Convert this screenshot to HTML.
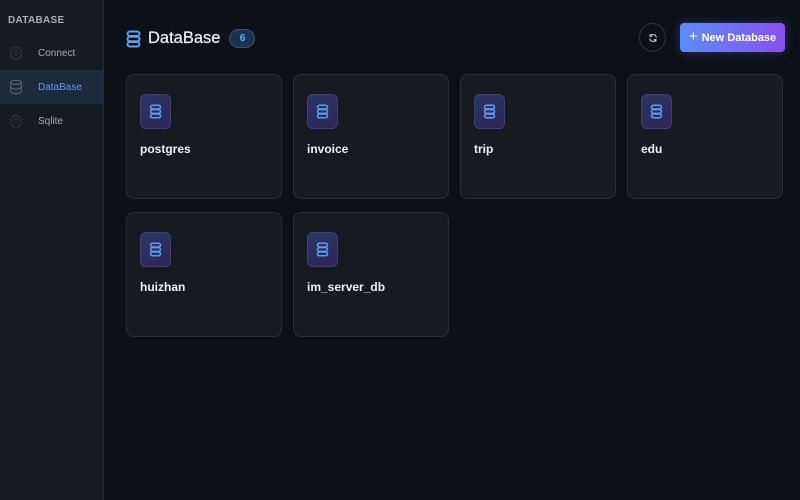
<!DOCTYPE html>
<html><head><meta charset="utf-8"><style>
*{margin:0;padding:0;box-sizing:border-box}
body{width:800px;height:500px;overflow:hidden;background:#0d1017;font-family:"Liberation Sans",sans-serif;position:relative}
.side{position:absolute;left:0;top:0;width:104px;height:500px;background:#161a22;border-right:1px solid #262b35}
.side h6{position:absolute;left:8px;top:15px;font-size:10px;font-weight:bold;color:#a8adb6;letter-spacing:.3px}
.item{position:absolute;left:0;width:103px;height:34px;display:flex;align-items:center;font-size:10px;color:#a7acb5}
.item svg{position:absolute;left:8px;top:9px}
.item span{position:absolute;left:38px}
.item.act{background:#1b2a3d}
.item.act span{color:#5ea0ec}
.title{position:absolute;left:126px;top:29px;display:flex;align-items:center}
.title span{font-size:16.5px;color:#f0f2f5;margin-left:7px;-webkit-text-stroke:.2px #f0f2f5}
.badge{margin-left:9px;width:26px;height:19px;border-radius:10px;background:#1b3353;border:1px solid #335479;color:#6aaaf3;font-size:10px;font-weight:bold;display:flex;align-items:center;justify-content:center}
.ref{position:absolute;left:639px;top:23px;width:27px;height:29px;border-radius:50%;border:1px solid #2f3440;display:flex;align-items:center;justify-content:center}
.btn{position:absolute;left:680px;top:23px;width:105px;height:29px;border-radius:4px;background:linear-gradient(90deg,#5b8ef8,#8a4ff0);color:#fff;font-size:11px;font-weight:bold;display:flex;align-items:center;justify-content:center;box-shadow:0 0 10px rgba(100,110,250,.35)}
.btn i{font-style:normal;font-weight:normal;font-size:15px;margin-right:4px;margin-top:-2px}
.card{position:absolute;width:156px;height:125px;border:1px solid #2a2e37;border-radius:8px;background:#171a21}
.ic{position:absolute;left:13px;top:19px;width:31px;height:35px;border-radius:6px;background:linear-gradient(160deg,#2a3566,#2e2656);border:1px solid #3a4275;display:flex;align-items:center;justify-content:center}
.card b{position:absolute;left:13px;top:67px;font-size:12px;color:#eef0f3}
</style></head><body>
<div class="side">
<h6>DATABASE</h6>
<div class="item" style="top:36px"><svg width="16" height="16" viewBox="0 0 24 24" fill="none" stroke="#30343d" stroke-width="1.5"><circle cx="12" cy="12" r="3"/><path d="M12 2l2 3 3.5-1 .5 3.5 3 2-2 3 2 3-3 2-.5 3.5-3.5-1-2 3-2-3-3.5 1L6 17.5l-3-2 2-3-2-3 3-2L6.5 4l3.5 1z"/></svg><span>Connect</span></div>
<div class="item act" style="top:70px"><svg width="16" height="16" viewBox="0 0 24 24" fill="none" stroke="#5d636e" stroke-width="1.6"><ellipse cx="12" cy="5" rx="8" ry="3"/><path d="M4 5v14c0 1.7 3.6 3 8 3s8-1.3 8-3V5M4 12c0 1.7 3.6 3 8 3s8-1.3 8-3"/></svg><span>DataBase</span></div>
<div class="item" style="top:104px"><svg width="16" height="16" viewBox="0 0 24 24" fill="none" stroke="#30343d" stroke-width="1.5"><circle cx="12" cy="12" r="3"/><path d="M12 2l2 3 3.5-1 .5 3.5 3 2-2 3 2 3-3 2-.5 3.5-3.5-1-2 3-2-3-3.5 1L6 17.5l-3-2 2-3-2-3 3-2L6.5 4l3.5 1z"/></svg><span>Sqlite</span></div>
</div>
<div class="title"><svg width="15" height="18" viewBox="0 0 20 24" fill="none" stroke="#5ea0ec" stroke-width="2.6"><rect x="2" y="2" width="16" height="6" rx="3"/><rect x="2" y="9" width="16" height="6" rx="3"/><rect x="2" y="16" width="16" height="6" rx="3"/></svg><span>DataBase</span><div class="badge">6</div></div>
<div class="ref"><svg width="10" height="10" viewBox="0 0 24 24" fill="none" stroke="#c8ccd3" stroke-width="2.5"><path d="M20 11A8 8 0 0 0 5 8M4 13a8 8 0 0 0 15 3"/><path d="M5 3v5h5M19 21v-5h-5"/></svg></div>
<div class="btn"><i>+</i>New Database</div>
<div class="card" style="left:126px;top:74px"><div class="ic"><svg width="13" height="15" viewBox="0 0 20 24" fill="none" stroke="#5e9ef0" stroke-width="2.4"><rect x="2" y="2" width="16" height="6" rx="3"/><rect x="2" y="9" width="16" height="6" rx="3"/><rect x="2" y="16" width="16" height="6" rx="3"/></svg></div><b>postgres</b></div>
<div class="card" style="left:293px;top:74px"><div class="ic"><svg width="13" height="15" viewBox="0 0 20 24" fill="none" stroke="#5e9ef0" stroke-width="2.4"><rect x="2" y="2" width="16" height="6" rx="3"/><rect x="2" y="9" width="16" height="6" rx="3"/><rect x="2" y="16" width="16" height="6" rx="3"/></svg></div><b>invoice</b></div>
<div class="card" style="left:460px;top:74px"><div class="ic"><svg width="13" height="15" viewBox="0 0 20 24" fill="none" stroke="#5e9ef0" stroke-width="2.4"><rect x="2" y="2" width="16" height="6" rx="3"/><rect x="2" y="9" width="16" height="6" rx="3"/><rect x="2" y="16" width="16" height="6" rx="3"/></svg></div><b>trip</b></div>
<div class="card" style="left:627px;top:74px"><div class="ic"><svg width="13" height="15" viewBox="0 0 20 24" fill="none" stroke="#5e9ef0" stroke-width="2.4"><rect x="2" y="2" width="16" height="6" rx="3"/><rect x="2" y="9" width="16" height="6" rx="3"/><rect x="2" y="16" width="16" height="6" rx="3"/></svg></div><b>edu</b></div>
<div class="card" style="left:126px;top:212px"><div class="ic"><svg width="13" height="15" viewBox="0 0 20 24" fill="none" stroke="#5e9ef0" stroke-width="2.4"><rect x="2" y="2" width="16" height="6" rx="3"/><rect x="2" y="9" width="16" height="6" rx="3"/><rect x="2" y="16" width="16" height="6" rx="3"/></svg></div><b>huizhan</b></div>
<div class="card" style="left:293px;top:212px"><div class="ic"><svg width="13" height="15" viewBox="0 0 20 24" fill="none" stroke="#5e9ef0" stroke-width="2.4"><rect x="2" y="2" width="16" height="6" rx="3"/><rect x="2" y="9" width="16" height="6" rx="3"/><rect x="2" y="16" width="16" height="6" rx="3"/></svg></div><b>im_server_db</b></div>
</body></html>
